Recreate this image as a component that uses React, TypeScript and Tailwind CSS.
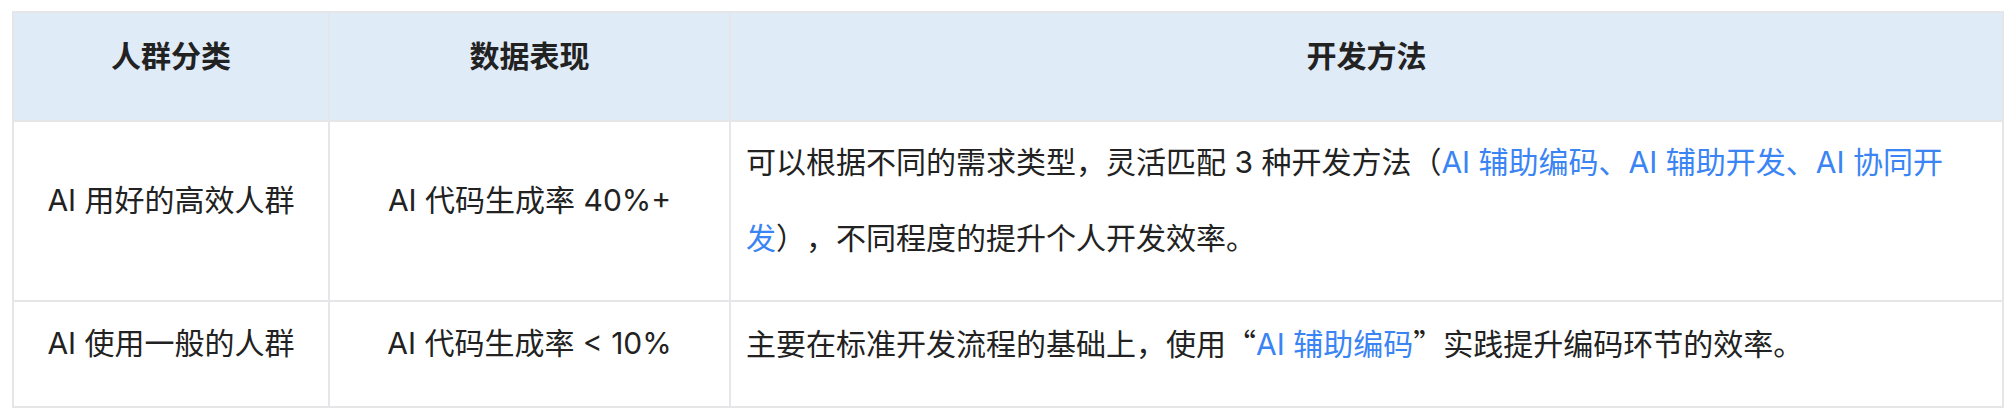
import React from "react";

const Blue = ({ children }: { children: React.ReactNode }) => (
  <span className="text-[#3a84f4]">{children}</span>
);

const Cjk = ({ children }: { children: React.ReactNode }) => (
  <span className="font-['Noto_Sans_CJK_SC']">{children}</span>
);

export default function App() {
  const font = { fontFamily: '"Inter", "Noto Sans CJK SC", sans-serif' };
  return (
    <div className="w-[2012px] h-[414px] bg-white pl-[12px] pt-[11px] [text-spacing-trim:space-all]" style={font}>
      <table className="table-fixed border-collapse w-[1990px] text-[30px] leading-[76px] text-[#222222]">
        <colgroup>
          <col className="w-[316px]" />
          <col className="w-[401px]" />
          <col className="w-[1273px]" />
        </colgroup>
        <thead>
          <tr className="bg-[#e0ebf8]">
            <th className="border-2 border-[#e6e6e8] pt-[5px] pb-[26px] px-4 font-bold text-center">人群分类</th>
            <th className="border-2 border-[#e6e6e8] pt-[5px] pb-[26px] px-4 font-bold text-center">数据表现</th>
            <th className="border-2 border-[#e6e6e8] pt-[5px] pb-[26px] px-4 font-bold text-center">开发方法</th>
          </tr>
        </thead>
        <tbody>
          <tr>
            <td className="border-2 border-[#e6e6e8] pt-[2px] pb-[24px] px-4 text-center">AI 用好的高效人群</td>
            <td className="border-2 border-[#e6e6e8] pt-[2px] pb-[24px] px-4 text-center">AI 代码生成率 40%+</td>
            <td className="border-2 border-[#e6e6e8] pt-[2px] pb-[24px] pl-[15px] pr-4 text-left">
              可以根据不同的需求类型，灵活匹配 3 种开发方法（<Blue>AI 辅助编码、AI 辅助开发、AI 协同开发</Blue>），不同程度的提升个人开发效率。
            </td>
          </tr>
          <tr>
            <td className="border-2 border-[#e6e6e8] pt-[2px] pb-[24px] px-4 text-center">AI 使用一般的人群</td>
            <td className="border-2 border-[#e6e6e8] pt-[2px] pb-[24px] px-4 text-center">AI 代码生成率 &lt; 10%</td>
            <td className="border-2 border-[#e6e6e8] pt-[2px] pb-[24px] pl-[15px] pr-4 text-left">
              主要在标准开发流程的基础上，使用<Cjk>“</Cjk><Blue>AI 辅助编码</Blue><Cjk>”</Cjk>实践提升编码环节的效率。
            </td>
          </tr>
        </tbody>
      </table>
    </div>
  );
}
